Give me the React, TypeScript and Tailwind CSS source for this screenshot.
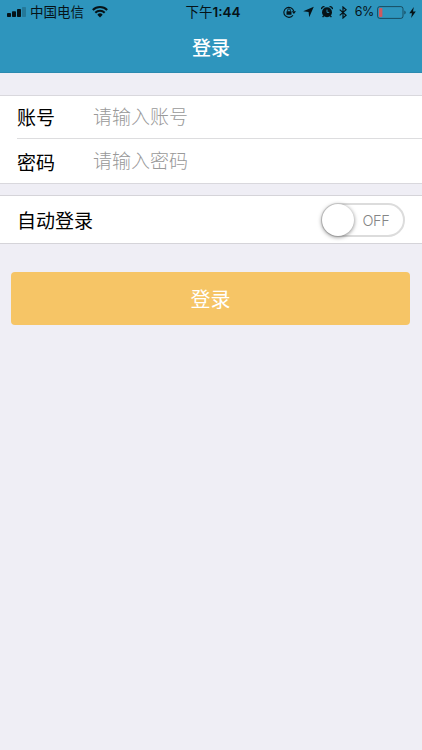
import { useState } from 'react';

type Field = {
  name: 'account' | 'password';
  label: string;
  type: string;
  placeholder: string;
};

const fields: Field[] = [
  { name: 'account', label: '账号', type: 'text', placeholder: '请输入账号' },
  { name: 'password', label: '密码', type: 'password', placeholder: '请输入密码' },
];

const SignalIcon = () => (
  <svg width="19" height="11" viewBox="0 0 19 11">
    <rect x="0" y="6" width="4" height="4" rx="0.8" />
    <rect x="5" y="4.3" width="4" height="5.7" rx="0.8" />
    <rect x="10" y="2" width="4" height="8" rx="0.8" />
    <rect x="15" y="0" width="4" height="10" rx="0.8" opacity="0.22" />
  </svg>
);

const WifiIcon = () => (
  <svg width="16" height="12" viewBox="0 0 16 12" fill="none" stroke="currentColor" strokeWidth="2">
    <path d="M0.8 4a10.2 10.2 0 0 1 14.4 0" />
    <path d="M3.3 6.7a6.6 6.6 0 0 1 9.4 0" />
    <path d="M8 11.4L5.3 8.7a3.8 3.8 0 0 1 5.4 0z" fill="currentColor" stroke="none" />
  </svg>
);

const RotationLockIcon = () => (
  <svg width="13" height="12" viewBox="0 0 13 12">
    <path d="M10 9.2A5 5 0 1 1 10.7 5" fill="none" stroke="currentColor" strokeWidth="1.1" />
    <path d="M8.7 5.2H13L10.9 7.9z" />
    <rect x="3.5" y="5.2" width="5" height="3.6" rx="0.4" />
    <path d="M4.6 5.5V4.2a1.4 1.4 0 0 1 2.8 0v1.3" fill="none" stroke="currentColor" strokeWidth="0.9" />
  </svg>
);

const LocationIcon = () => (
  <svg width="11" height="12" viewBox="0 0 11 12">
    <path d="M10.8 0.7L6.2 11.3L5.6 5.9L0.2 5.3z" />
  </svg>
);

const AlarmIcon = () => (
  <svg width="12" height="12" viewBox="0 0 12 12">
    <circle cx="6" cy="6.2" r="5" />
    <path d="M0.7 3.2a2 2 0 0 1 2.8-2.3M11.3 3.2A2 2 0 0 0 8.5 0.9M2.8 9.6L1.6 11.1M9.2 9.6l1.2 1.5" fill="none" stroke="currentColor" strokeWidth="1.3" />
    <path d="M6 3.6V6.4H8.2" fill="none" stroke="#2e95bd" strokeWidth="0.9" />
  </svg>
);

const BluetoothIcon = () => (
  <svg width="8" height="13" viewBox="0 0 8 13" fill="none" stroke="currentColor" strokeWidth="1.2">
    <path d="M0.7 3.6L7.1 9.2L4 12V1L7.1 3.8L0.7 9.4" />
  </svg>
);

const BatteryIcon = () => (
  <svg width="29" height="13" viewBox="0 0 29 13">
    <rect x="0.6" y="0.6" width="25.4" height="11.8" rx="2.2" fill="none" stroke="currentColor" strokeWidth="1" opacity="0.55" />
    <rect x="2" y="2" width="3.4" height="9" rx="0.8" fill="#cf5960" />
    <path d="M27.3 4.4q1.4 0.6 1.4 2.1t-1.4 2.1z" opacity="0.55" />
  </svg>
);

const BoltIcon = () => (
  <svg width="7" height="11" viewBox="0 0 7 11">
    <path d="M4.8 0L0.3 6.2H3L2.1 11L6.8 4.5H4z" />
  </svg>
);

function StatusBar() {
  return (
    <div className="grid h-6 grid-cols-[1fr_auto_1fr] items-center fill-current pl-[7px] pr-[6px] text-[13.5px] leading-[22px] text-[#061318]">
      <div className="flex items-center">
        <SignalIcon />
        <span className="ml-1 mr-2 pt-[2px]">中国电信</span>
        <WifiIcon />
      </div>
      <div className="flex items-center pl-[3px]">
        <span className="pt-[2px]">下午</span>
        <span className="font-['Inter',sans-serif] text-[13.5px] font-semibold">1:44</span>
      </div>
      <div className="flex items-center justify-end">
        <RotationLockIcon />
        <span className="ml-[7px] flex"><LocationIcon /></span>
        <span className="ml-[7px] flex"><AlarmIcon /></span>
        <span className="ml-[6px] flex"><BluetoothIcon /></span>
        <span className="ml-[8px] mr-[3px] font-['Inter',sans-serif] text-[12.5px] tracking-[-0.4px]">6%</span>
        <BatteryIcon />
        <span className="ml-[3px] flex"><BoltIcon /></span>
      </div>
    </div>
  );
}

export default function App() {
  const [formData, setFormData] = useState({ account: '', password: '' });
  const [autoLogin, setAutoLogin] = useState(false);

  const handleChange = (e: React.ChangeEvent<HTMLInputElement>) => {
    const { name, value } = e.target;
    setFormData(prev => ({ ...prev, [name]: value }));
  };

  return (
    <div className="min-h-screen bg-[#efeef5] font-['Liberation_Sans','Noto_Sans_CJK_SC',sans-serif] text-[19px] text-black">
      <header className="h-[73px] border-b border-[#2b8ab0] bg-[#2e95bd]">
        <StatusBar />
        <h1 className="pt-[2px] text-center text-[19px] font-medium leading-[46px] text-white">登录</h1>
      </header>

      <form onSubmit={e => e.preventDefault()}>
        <div className="mt-[22px] border-y border-[#d9d8dd] bg-white">
          {fields.map((field, i) => (
            <div key={field.name} className="pl-[17px]">
              <div className={`flex items-center ${i > 0 ? 'h-[45px] border-t border-[#dddddf] pt-[5px]' : 'h-[42px] pt-[4px]'}`}>
                <label htmlFor={field.name} className="w-[76px] leading-6">{field.label}</label>
                <input
                  id={field.name}
                  name={field.name}
                  type={field.type}
                  value={formData[field.name]}
                  onChange={handleChange}
                  placeholder={field.placeholder}
                  className="mb-[3px] min-w-0 flex-1 font-light leading-6 outline-none placeholder:text-[#999999]"
                />
              </div>
            </div>
          ))}
        </div>

        <div className="mt-[11px] flex h-[49px] items-center justify-between border-y border-[#d5d4d9] bg-white pl-[17px] pr-[17px]">
          <span className="pt-[5px]">自动登录</span>
          <button
            type="button"
            role="switch"
            aria-checked={autoLogin}
            onClick={() => setAutoLogin(!autoLogin)}
            className={`flex h-[34px] w-[84px] items-center rounded-full border-2 border-[#dcdcdc] bg-white ${autoLogin ? 'flex-row-reverse' : ''}`}
          >
            <span className="-ml-px size-8 rounded-full bg-white shadow-[0_1px_4px_rgba(0,0,0,0.5)]" />
            <span className="flex-1 pr-[5px] pt-[2px] text-center font-['Inter',sans-serif] text-[14.5px] font-light tracking-[-0.3px] text-[#858585]">
              {autoLogin ? 'ON' : 'OFF'}
            </span>
          </button>
        </div>

        <div className="mt-7 pl-[11px] pr-[12px]">
          <button type="submit" className="block h-[53px] w-full rounded-[4px] bg-[#f6c566] pt-[2px] text-[20px] text-white">
            登录
          </button>
        </div>
      </form>
    </div>
  );
}
